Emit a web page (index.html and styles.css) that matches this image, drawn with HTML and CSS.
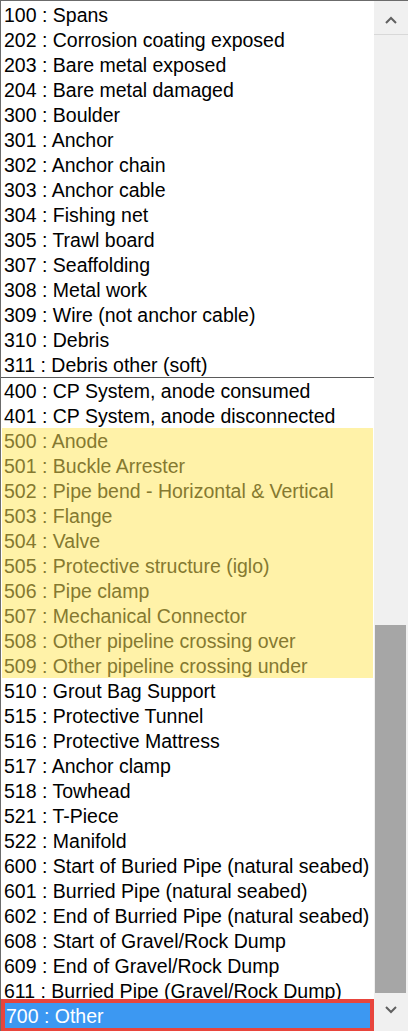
FILE: index.html
```html
<!DOCTYPE html>
<html>
<head>
<meta charset="utf-8">
<link rel="stylesheet" href="styles.css">
</head>
<body>
<div class="box">
  <div class="list">
    <div class="row">100 : Spans</div>
    <div class="row">202 : Corrosion coating exposed</div>
    <div class="row">203 : Bare metal exposed</div>
    <div class="row">204 : Bare metal damaged</div>
    <div class="row">300 : Boulder</div>
    <div class="row">301 : Anchor</div>
    <div class="row">302 : Anchor chain</div>
    <div class="row">303 : Anchor cable</div>
    <div class="row">304 : Fishing net</div>
    <div class="row">305 : Trawl board</div>
    <div class="row">307 : Seaffolding</div>
    <div class="row">308 : Metal work</div>
    <div class="row">309 : Wire (not anchor cable)</div>
    <div class="row">310 : Debris</div>
    <div class="row sep">311 : Debris other (soft)</div>
    <div class="row">400 : CP System, anode consumed</div>
    <div class="row">401 : CP System, anode disconnected</div>
    <div class="group">
      <div class="row hl">500 : Anode</div>
      <div class="row hl">501 : Buckle Arrester</div>
      <div class="row hl">502 : Pipe bend - Horizontal &amp; Vertical</div>
      <div class="row hl">503 : Flange</div>
      <div class="row hl">504 : Valve</div>
      <div class="row hl">505 : Protective structure (iglo)</div>
      <div class="row hl">506 : Pipe clamp</div>
      <div class="row hl">507 : Mechanical Connector</div>
      <div class="row hl">508 : Other pipeline crossing over</div>
      <div class="row hl">509 : Other pipeline crossing under</div>
    </div>
    <div class="row">510 : Grout Bag Support</div>
    <div class="row">515 : Protective Tunnel</div>
    <div class="row">516 : Protective Mattress</div>
    <div class="row">517 : Anchor clamp</div>
    <div class="row">518 : Towhead</div>
    <div class="row">521 : T-Piece</div>
    <div class="row">522 : Manifold</div>
    <div class="row">600 : Start of Buried Pipe (natural seabed)</div>
    <div class="row">601 : Burried Pipe (natural seabed)</div>
    <div class="row">602 : End of Burried Pipe (natural seabed)</div>
    <div class="row">608 : Start of Gravel/Rock Dump</div>
    <div class="row">609 : End of Gravel/Rock Dump</div>
    <div class="row">611 : Burried Pipe (Gravel/Rock Dump)</div>
    <div class="row sel">700 : Other</div>
  </div>
  <div class="scroll">
    <div class="btn up">
      <svg width="12" height="8" viewBox="0 0 12 8"><path d="M1 7 L6 2 L11 7" fill="none" stroke="#606060" stroke-width="2"/></svg>
    </div>
    <div class="track"></div>
    <div class="thumb"></div>
    <div class="btn down">
      <svg width="12" height="8" viewBox="0 0 12 8"><path d="M1 1 L6 6 L11 1" fill="none" stroke="#606060" stroke-width="2"/></svg>
    </div>
  </div>
</div>
</body>
</html>
```

FILE: styles.css
```css
html, body {
  margin: 0;
  padding: 0;
  background: #ffffff;
}
.box {
  width: 408px;
  height: 1031px;
  box-sizing: border-box;
  border-top: 1px solid #6b6b6b;
  border-left: 1px solid #6b6b6b;
  display: flex;
  overflow: hidden;
  font-family: "Liberation Sans", Arial, sans-serif;
  font-size: 19.5px;
  color: #000;
}
.list {
  width: 373px;
  flex: none;
  padding-top: 1px;
  display: flex;
  flex-direction: column;
  overflow: hidden;
}
.row {
  height: 25px;
  line-height: 25px;
  padding-top: 1px;
  padding-left: 3px;
  white-space: nowrap;
  box-sizing: border-box;
  flex: none;
}
.row.sep {
  height: 26px;
  border-bottom: 1px solid #5a5a5a;
}
.group {
  background: #fff2a8;
  margin-left: 1px;
  width: 371px;
  flex: none;
}
.group .row {
  padding-left: 2px;
}
.hl {
  color: #857930;
}
.sel {
  margin-left: 4px;
  width: 365px;
  background: #3c98f2;
  color: #ffffff;
  padding-left: 1px;
  outline: 4px solid #e8453d;
}
.scroll {
  width: 34px;
  flex: none;
  background: #f0f0f0;
  display: flex;
  flex-direction: column;
}
.btn {
  display: flex;
  align-items: center;
  justify-content: center;
  flex: none;
}
.up {
  height: 34px;
  border-bottom: 1px solid #d8d8d8;
  box-sizing: border-box;
  padding-top: 4px;
}
.down {
  height: 38px;
  padding-bottom: 4px;
  box-sizing: border-box;
}
.track {
  flex: 1;
}
.thumb {
  height: 368px;
  flex: none;
  margin: 0 2px 0 1px;
  background: #a6a6a6;
}
```
